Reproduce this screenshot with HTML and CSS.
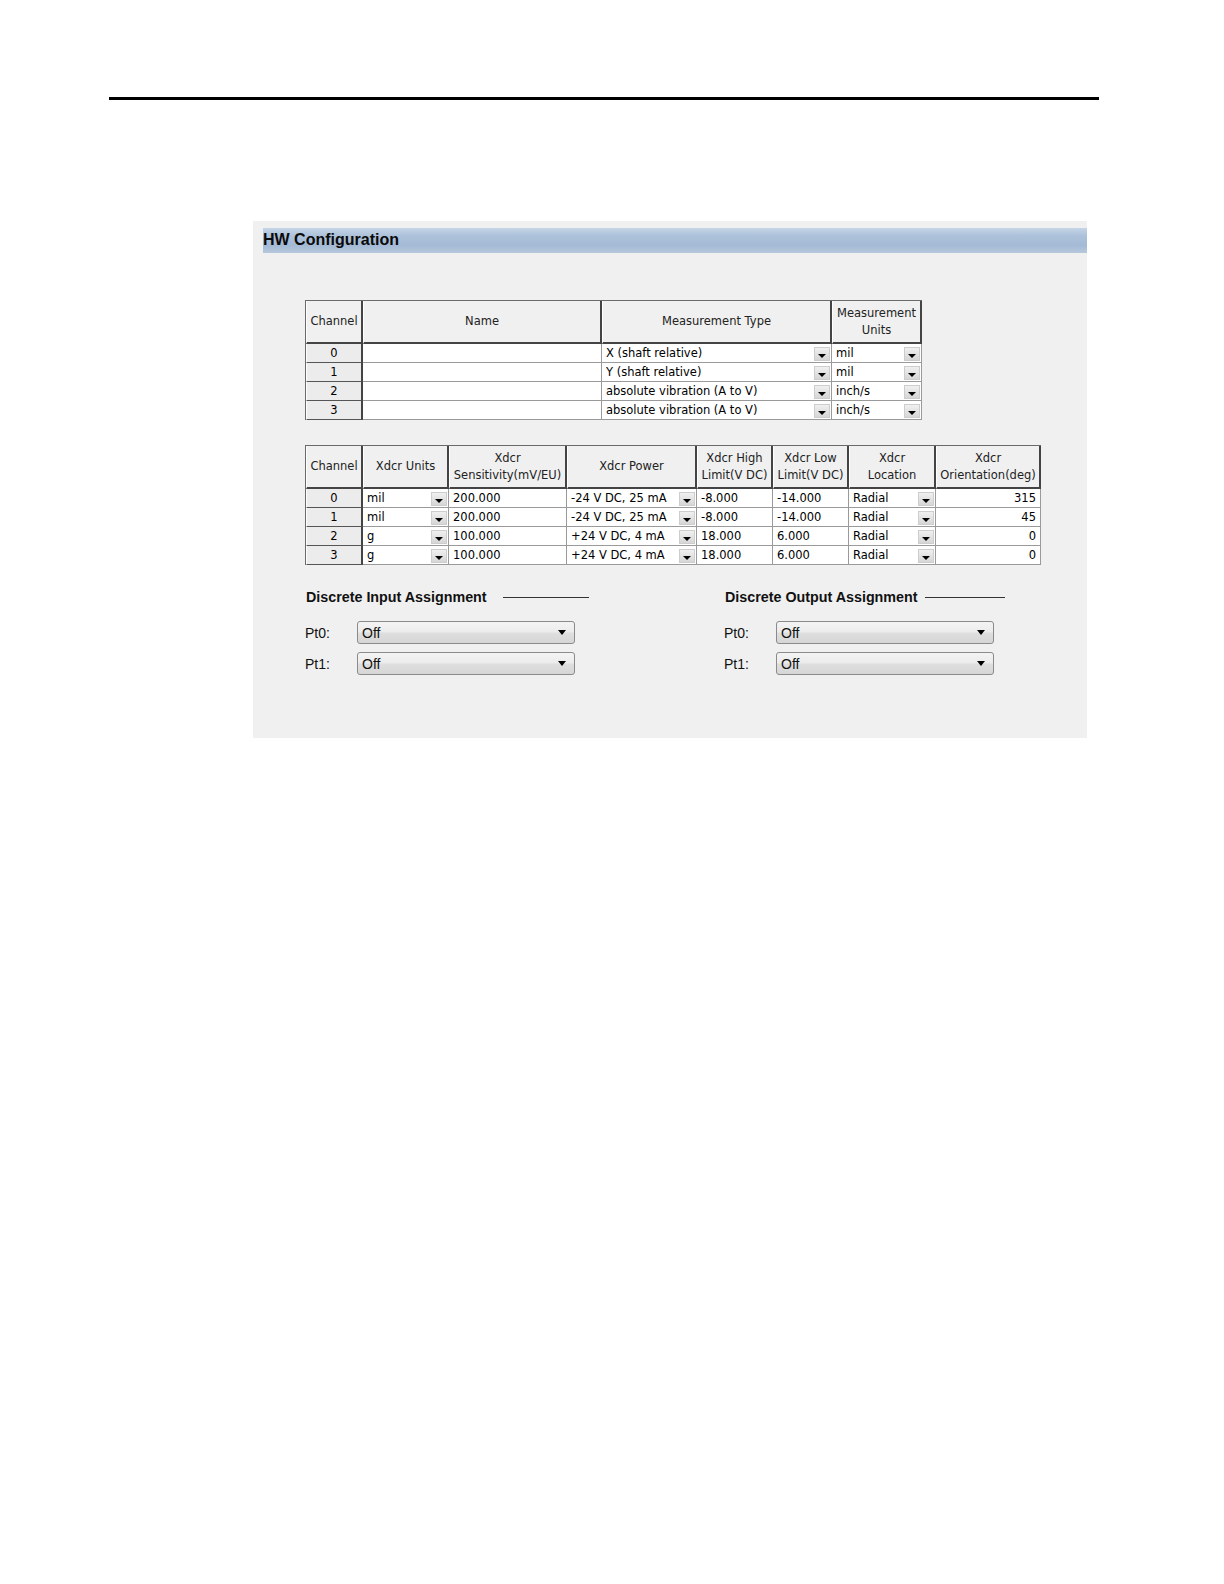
FILE: index.html
```html
<!DOCTYPE html>
<html>
<head>
<meta charset="utf-8">
<title>HW Configuration</title>
<link rel="stylesheet" href="styles.css">
</head>
<body>
<div class="page">
  <div class="rule"></div>
  <section class="panel">
    <div class="titlebar">HW Configuration</div>

    <table class="grid grid-1">
      <colgroup>
        <col class="c-ch"><col class="c-name"><col class="c-mtype"><col class="c-munits">
      </colgroup>
      <thead>
        <tr><th>Channel</th><th>Name</th><th>Measurement Type</th><th>Measurement<br>Units</th></tr>
      </thead>
      <tbody>
        <tr><td class="ch">0</td><td></td><td class="cb"><div class="combo"><span>X (shaft relative)</span><span class="btn"><svg width="8" height="4" viewBox="0 0 8 4"><path d="M0 0h8L4 4z"/></svg></span></div></td><td class="cb"><div class="combo"><span>mil</span><span class="btn"><svg width="8" height="4" viewBox="0 0 8 4"><path d="M0 0h8L4 4z"/></svg></span></div></td></tr>
        <tr><td class="ch">1</td><td></td><td class="cb"><div class="combo"><span>Y (shaft relative)</span><span class="btn"><svg width="8" height="4" viewBox="0 0 8 4"><path d="M0 0h8L4 4z"/></svg></span></div></td><td class="cb"><div class="combo"><span>mil</span><span class="btn"><svg width="8" height="4" viewBox="0 0 8 4"><path d="M0 0h8L4 4z"/></svg></span></div></td></tr>
        <tr><td class="ch">2</td><td></td><td class="cb"><div class="combo"><span>absolute vibration (A to V)</span><span class="btn"><svg width="8" height="4" viewBox="0 0 8 4"><path d="M0 0h8L4 4z"/></svg></span></div></td><td class="cb"><div class="combo"><span>inch/s</span><span class="btn"><svg width="8" height="4" viewBox="0 0 8 4"><path d="M0 0h8L4 4z"/></svg></span></div></td></tr>
        <tr><td class="ch">3</td><td></td><td class="cb"><div class="combo"><span>absolute vibration (A to V)</span><span class="btn"><svg width="8" height="4" viewBox="0 0 8 4"><path d="M0 0h8L4 4z"/></svg></span></div></td><td class="cb"><div class="combo"><span>inch/s</span><span class="btn"><svg width="8" height="4" viewBox="0 0 8 4"><path d="M0 0h8L4 4z"/></svg></span></div></td></tr>
      </tbody>
    </table>

    <table class="grid grid-2">
      <colgroup>
        <col class="c-ch"><col class="c-xunits"><col class="c-sens"><col class="c-power"><col class="c-lim"><col class="c-lim"><col class="c-loc"><col class="c-orient">
      </colgroup>
      <thead>
        <tr><th>Channel</th><th>Xdcr Units</th><th>Xdcr<br>Sensitivity(mV/EU)</th><th>Xdcr Power</th><th>Xdcr High<br>Limit(V DC)</th><th>Xdcr Low<br>Limit(V DC)</th><th>Xdcr<br>Location</th><th>Xdcr<br>Orientation(deg)</th></tr>
      </thead>
      <tbody>
        <tr><td class="ch">0</td><td class="cb"><div class="combo"><span>mil</span><span class="btn"><svg width="8" height="4" viewBox="0 0 8 4"><path d="M0 0h8L4 4z"/></svg></span></div></td><td>200.000</td><td class="cb"><div class="combo"><span>-24 V DC, 25 mA</span><span class="btn"><svg width="8" height="4" viewBox="0 0 8 4"><path d="M0 0h8L4 4z"/></svg></span></div></td><td>-8.000</td><td>-14.000</td><td class="cb"><div class="combo"><span>Radial</span><span class="btn"><svg width="8" height="4" viewBox="0 0 8 4"><path d="M0 0h8L4 4z"/></svg></span></div></td><td class="num">315</td></tr>
        <tr><td class="ch">1</td><td class="cb"><div class="combo"><span>mil</span><span class="btn"><svg width="8" height="4" viewBox="0 0 8 4"><path d="M0 0h8L4 4z"/></svg></span></div></td><td>200.000</td><td class="cb"><div class="combo"><span>-24 V DC, 25 mA</span><span class="btn"><svg width="8" height="4" viewBox="0 0 8 4"><path d="M0 0h8L4 4z"/></svg></span></div></td><td>-8.000</td><td>-14.000</td><td class="cb"><div class="combo"><span>Radial</span><span class="btn"><svg width="8" height="4" viewBox="0 0 8 4"><path d="M0 0h8L4 4z"/></svg></span></div></td><td class="num">45</td></tr>
        <tr><td class="ch">2</td><td class="cb"><div class="combo"><span>g</span><span class="btn"><svg width="8" height="4" viewBox="0 0 8 4"><path d="M0 0h8L4 4z"/></svg></span></div></td><td>100.000</td><td class="cb"><div class="combo"><span>+24 V DC, 4 mA</span><span class="btn"><svg width="8" height="4" viewBox="0 0 8 4"><path d="M0 0h8L4 4z"/></svg></span></div></td><td>18.000</td><td>6.000</td><td class="cb"><div class="combo"><span>Radial</span><span class="btn"><svg width="8" height="4" viewBox="0 0 8 4"><path d="M0 0h8L4 4z"/></svg></span></div></td><td class="num">0</td></tr>
        <tr><td class="ch">3</td><td class="cb"><div class="combo"><span>g</span><span class="btn"><svg width="8" height="4" viewBox="0 0 8 4"><path d="M0 0h8L4 4z"/></svg></span></div></td><td>100.000</td><td class="cb"><div class="combo"><span>+24 V DC, 4 mA</span><span class="btn"><svg width="8" height="4" viewBox="0 0 8 4"><path d="M0 0h8L4 4z"/></svg></span></div></td><td>18.000</td><td>6.000</td><td class="cb"><div class="combo"><span>Radial</span><span class="btn"><svg width="8" height="4" viewBox="0 0 8 4"><path d="M0 0h8L4 4z"/></svg></span></div></td><td class="num">0</td></tr>
      </tbody>
    </table>

    <div class="discrete">
      <div class="dgroup dgroup-in">
        <div class="legend"><span class="legend-text">Discrete Input Assignment</span><span class="legend-line line-in"></span></div>
        <div class="field"><span class="flabel">Pt0:</span><div class="select"><span>Off</span><svg width="8" height="5" viewBox="0 0 8 5"><path d="M0 0h8L4 5z"/></svg></div></div>
        <div class="field"><span class="flabel">Pt1:</span><div class="select"><span>Off</span><svg width="8" height="5" viewBox="0 0 8 5"><path d="M0 0h8L4 5z"/></svg></div></div>
      </div>
      <div class="dgroup dgroup-out">
        <div class="legend"><span class="legend-text">Discrete Output Assignment</span><span class="legend-line line-out"></span></div>
        <div class="field"><span class="flabel">Pt0:</span><div class="select"><span>Off</span><svg width="8" height="5" viewBox="0 0 8 5"><path d="M0 0h8L4 5z"/></svg></div></div>
        <div class="field"><span class="flabel">Pt1:</span><div class="select"><span>Off</span><svg width="8" height="5" viewBox="0 0 8 5"><path d="M0 0h8L4 5z"/></svg></div></div>
      </div>
    </div>
  </section>
</div>
</body>
</html>
```

FILE: styles.css
```css
* { box-sizing: border-box; }
html, body { margin: 0; padding: 0; background: #fff; }
body { font-family: "Liberation Sans", Arial, sans-serif; color: #000; }

.page { padding: 97px 0 0 109px; }
.rule { width: 990px; height: 3px; background: #000; }

.panel {
  margin: 121px 0 0 144px;
  width: 834px;
  height: 517px;
  background: #f0f0f0;
  padding-top: 7px;
  overflow: hidden;
}

.titlebar {
  margin-left: 10px;
  height: 25px;
  line-height: 23px;
  font-size: 16px;
  font-weight: bold;
  color: #0a0a0a;
  background: linear-gradient(to bottom, #c6d5e6 0%, #adc2da 30%, #a4bad5 70%, #b6c8dc 100%);
}

.grid {
  border-collapse: separate;
  border-spacing: 0;
  table-layout: fixed;
  font-family: "DejaVu Sans", Verdana, sans-serif;
  font-size: 11.5px;
  margin-left: 52px;
  border-top: 1px solid #6a6a6a;
  border-left: 1px solid #6a6a6a;
}
.grid-1 { width: 616px; margin-top: 47px; }
.grid-2 { width: 735px; margin-top: 25px; }

.c-ch { width: 57px; }
.c-name { width: 239px; }
.c-mtype { width: 230px; }
.c-munits { width: 90px; }
.c-xunits { width: 86px; }
.c-sens { width: 118px; }
.c-power { width: 130px; }
.c-lim { width: 76px; }
.c-loc { width: 87px; }
.c-orient { width: 105px; }

.grid th {
  height: 43px;
  padding: 0 1px;
  font-weight: normal;
  color: #222;
  line-height: 17px;
  text-align: center;
  background: #f0f0f0;
  border-left: 1px solid #fff;
  border-right: 2px solid #444;
  border-bottom: 2px solid #444;
  white-space: nowrap;
}

.grid td {
  height: 19px;
  padding: 0 4px;
  background: #fff;
  color: #000;
  border-right: 1px solid #9a9a9a;
  border-bottom: 1px solid #9a9a9a;
  white-space: nowrap;
  overflow: hidden;
  line-height: 18px;
}
.grid td.ch {
  background: #ececec;
  text-align: center;
  border-left: 1px solid #fff;
  border-right: 2px solid #444;
  border-bottom: 1px solid #555;
  line-height: 17px;
  padding-top: 1px;
}
.grid td.num { text-align: right; }
.grid td.cb { padding: 0 1px 0 4px; }

.combo {
  display: flex;
  justify-content: space-between;
  align-items: stretch;
  height: 18px;
  line-height: 18px;
}
.combo span:first-child { overflow: hidden; }
.btn {
  flex: none;
  width: 16px;
  margin: 3px 0 1px;
  background: linear-gradient(to bottom, #f0f0f0, #d6d6d6);
  border: 1px solid #cdcdcd;
  display: flex;
  align-items: flex-end;
  justify-content: center;
  padding-bottom: 2px;
}
.btn svg { display: block; fill: #000; }

.discrete {
  display: flex;
  margin: 24px 0 0 52px;
  font-size: 14px;
  color: #111;
}
.dgroup-in { width: 419px; }
.dgroup-out { width: 300px; }

.legend {
  display: flex;
  align-items: center;
  height: 16px;
  font-size: 14.3px;
  font-weight: bold;
  margin-bottom: 16px;
}
.legend-text { padding-left: 1px; }
.legend-line { height: 1px; background: #333; }
.line-in { width: 86px; margin-left: 16px; }
.line-out { width: 80px; margin-left: 7px; }

.field {
  display: flex;
  align-items: center;
  height: 23px;
  margin-bottom: 8px;
}
.flabel { width: 52px; }
.select {
  width: 218px;
  height: 23px;
  border: 1px solid #8b8b8b;
  border-radius: 3px;
  background: linear-gradient(to bottom, #f4f4f4 0%, #ececec 45%, #dedede 55%, #d6d6d6 100%);
  display: flex;
  align-items: center;
  justify-content: space-between;
  padding: 0 8px 0 4px;
  font-size: 14px;
}
.select svg { display: block; fill: #000; }
```
